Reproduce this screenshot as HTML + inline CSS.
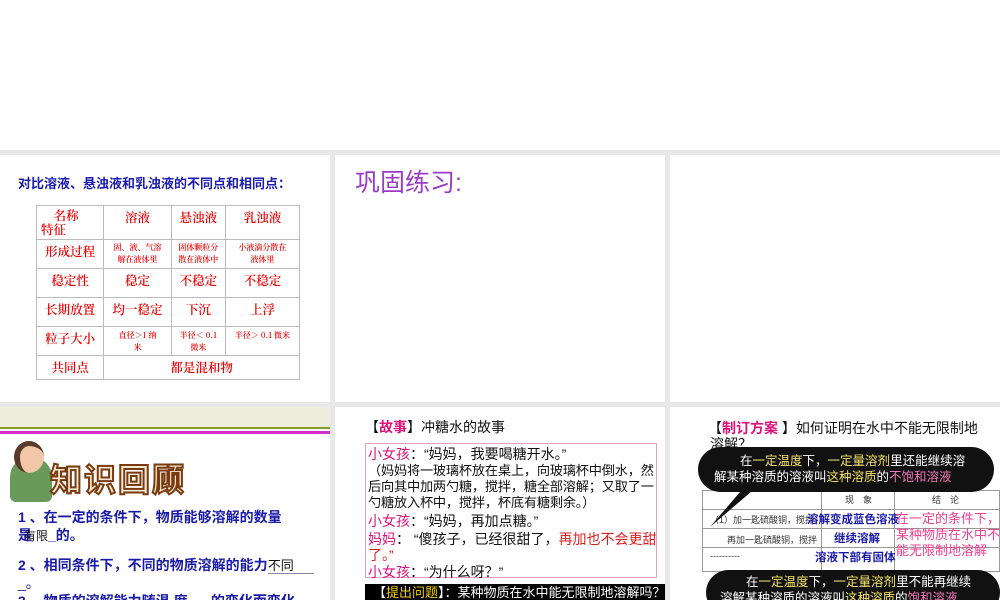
<!DOCTYPE html>
<html><head><meta charset="utf-8"><style>
*{margin:0;padding:0;box-sizing:border-box}
body{width:1000px;height:600px;overflow:hidden;background:#fff;position:relative;font-family:"Liberation Sans","Noto Sans CJK SC",sans-serif}
.bg{position:absolute;left:0;top:150px;width:1000px;height:450px;background:#e8e8e8}
.p{position:absolute;background:#fff;overflow:hidden}
.a{position:absolute;white-space:nowrap}
table{border-collapse:collapse;position:absolute;left:36px;top:50px;width:264px}
td{border:1px solid #bbb;color:#e00;font-family:"Noto Serif CJK SC",serif;font-size:12.5px;text-align:center;vertical-align:top;padding-top:2px;font-weight:600}
td.s{font-size:8px;line-height:12px}
.bl{color:#1a1aa8}
.pk{color:#e0107a}
.bub{position:absolute;background:#111;border-radius:40px;color:#fff;font-size:12.5px;line-height:16px}
.y{color:#f5e36a}.m{color:#f07ab8}
</style></head><body>
<div class="bg"></div>

<div class="p" style="left:0;top:155px;width:330px;height:247px">
<div class="a" style="left:18px;top:18px;font-size:13px;font-weight:bold;color:#1c1cb0">对比溶液、悬浊液和乳浊液的不同点和相同点：</div>
<table>
<tr style="height:34px"><td style="text-align:left;padding-left:4px;line-height:14px">&nbsp;&nbsp;&nbsp;&nbsp;名称<br>特征</td><td>溶液</td><td>悬浊液</td><td>乳浊液</td></tr>
<tr style="height:29px"><td>形成过程</td><td class="s">固、液、气溶<br>解在液体里</td><td class="s">固体颗粒分<br>散在液体中</td><td class="s">小液滴分散在<br>液体里</td></tr>
<tr style="height:29px"><td>稳定性</td><td>稳定</td><td>不稳定</td><td>不稳定</td></tr>
<tr style="height:29px"><td>长期放置</td><td>均一稳定</td><td>下沉</td><td>上浮</td></tr>
<tr style="height:29px"><td>粒子大小</td><td class="s" style="padding-top:3px">直径＞1 纳<br>米</td><td class="s" style="padding-top:3px">半径＜ 0.1<br>微米</td><td class="s" style="padding-top:3px">半径＞ 0.1 微米</td></tr>
<tr style="height:24px"><td>共同点</td><td colspan="3">都是混和物</td></tr>
</table>
</div>

<div class="p" style="left:335px;top:155px;width:330px;height:247px">
<div class="a" style="left:20px;top:8px;font-size:25px;color:#9a3cc8">巩固练习:</div>
</div>

<div class="p" style="left:670px;top:155px;width:330px;height:247px"></div>

<div class="p" style="left:0;top:407px;width:330px;height:193px">
<div style="position:absolute;left:0;top:0;width:330px;height:20px;background:#eeeedc"></div>
<div style="position:absolute;left:0;top:20px;width:330px;height:2px;background:#8a9a2a"></div>
<div style="position:absolute;left:0;top:24px;width:330px;height:3px;background:#d82cc8"></div>
<div style="position:absolute;left:10px;top:50px;width:42px;height:45px;background:#6a9a5a;border-radius:20px 20px 6px 6px"></div>
<div style="position:absolute;left:14px;top:34px;width:30px;height:32px;background:#f2c8a8;border-radius:50%;border-left:6px solid #5a3a2a;border-top:5px solid #5a3a2a"></div>
<div class="a" style="left:50px;top:48px;font-size:32px;font-weight:bold;color:#f4e8d0;-webkit-text-stroke:2px #7a3a10;letter-spacing:2px">知识回顾</div>
<div class="a bl" style="left:18px;top:100px;font-size:14px;font-weight:600">1 、在一定的条件下，物质能够溶解的数量</div>
<div class="a bl" style="left:18px;top:118px;font-size:14px;font-weight:600">是<span style="color:#111;font-size:12px;margin-left:-8px;font-weight:normal">有限</span>_的。</div>
<div class="a bl" style="left:18px;top:148px;font-size:14px;font-weight:600">2 、相同条件下，不同的物质溶解的能力<span style="color:#111;font-size:13px;border-bottom:1px solid #88a;padding-right:20px;font-weight:normal">不同</span></div>
<div class="a bl" style="left:18px;top:166px;font-size:14px">_。</div>
<div class="a bl" style="left:18px;top:184px;font-size:14px;font-weight:600">3 、物质的溶解能力随温 度 &nbsp;&nbsp;&nbsp;&nbsp;&nbsp;的变化而变化</div>
</div>

<div class="p" style="left:335px;top:407px;width:330px;height:193px">
<div class="a" style="left:30px;top:10px;font-size:14px;color:#111">【<span class="pk" style="font-weight:bold">故事</span>】冲糖水的故事</div>
<div style="position:absolute;left:30px;top:36px;width:292px;height:135px;border:1px solid #e0a0c8"></div>
<div class="a" style="left:33px;top:37px;font-size:14px;color:#111"><span class="pk">小女孩</span>：“妈妈，我要喝糖开水。”</div>
<div style="position:absolute;left:33px;top:56px;width:292px;font-size:13.2px;line-height:16px;color:#111;letter-spacing:-0.2px">（妈妈将一玻璃杯放在桌上，向玻璃杯中倒水，然后向其中加两勺糖，搅拌，糖全部溶解；又取了一勺糖放入杯中，搅拌，杯底有糖剩余。）</div>
<div class="a" style="left:33px;top:104px;font-size:14px;color:#111"><span class="pk">小女孩</span>：“妈妈，再加点糖。”</div>
<div style="position:absolute;left:33px;top:124px;width:292px;font-size:14px;line-height:16px;color:#111"><span class="pk">妈妈</span>： “傻孩子，已经很甜了，<span style="color:#e02020">再加也不会更甜了。”</span></div>
<div class="a" style="left:33px;top:157px;font-size:14px;color:#111;line-height:16px"><span class="pk">小女孩</span>：“为什么呀？”</div>
<div style="position:absolute;left:30px;top:177px;width:300px;height:20px;background:#000;color:#fff;font-size:13px;padding-left:8px;white-space:nowrap;line-height:18px">【<span style="color:#f5d000">提出问题</span>】：某种物质在水中能无限制地溶解吗？</div>
</div>

<div class="p" style="left:670px;top:407px;width:330px;height:193px">
<div class="a" style="left:38px;top:11px;font-size:14px;color:#111">【<span class="pk" style="font-weight:bold">制订方案</span> 】如何证明在水中不能无限制地</div>
<div class="a" style="left:40px;top:27px;font-size:14px;color:#111">溶解？</div>
<div style="position:absolute;left:32px;top:83px;width:298px;height:82px;border:1px solid #999"></div>
<div style="position:absolute;left:32px;top:102px;width:298px;border-top:1px solid #999"></div>
<div style="position:absolute;left:32px;top:121px;width:298px;border-top:1px solid #999"></div>
<div style="position:absolute;left:32px;top:140px;width:298px;border-top:1px solid #999"></div>
<div style="position:absolute;left:151px;top:83px;height:82px;border-left:1px solid #999"></div>
<div style="position:absolute;left:224px;top:83px;height:82px;border-left:1px solid #999"></div>
<div class="a" style="left:175px;top:86px;font-size:9px;color:#333">现　象</div>
<div class="a" style="left:262px;top:86px;font-size:9px;color:#333">结　论</div>
<div class="a" style="left:40px;top:106px;font-size:9px;color:#333">（1）加一匙硫酸铜，搅拌</div>
<div class="a" style="left:57px;top:126px;font-size:9px;color:#333">再加一匙硫酸铜，搅拌</div>
<div class="a" style="left:40px;top:144px;font-size:9px;color:#333">----------</div>
<div class="a" style="left:137px;top:104px;font-size:11.5px;font-weight:bold;color:#1a1aa8">溶解变成蓝色溶液</div>
<div class="a" style="left:164px;top:123px;font-size:11.5px;font-weight:bold;color:#1a1aa8">继续溶解</div>
<div class="a" style="left:145px;top:142px;font-size:11.5px;font-weight:bold;color:#1a1aa8">溶液下部有固体</div>
<div style="position:absolute;left:226px;top:104px;width:104px;font-size:13px;line-height:16px;color:#f04090">在一定的条件下，某种物质在水中不能无限制地溶解</div>
<svg style="position:absolute;left:0;top:0" width="330" height="193"><polygon points="70,85 110,60 40,120" fill="#111"/><polygon points="90,160 60,150 120,170" fill="#111"/></svg>
<div class="bub" style="left:28px;top:40px;width:296px;height:45px;padding:6px 0 0 16px"><span style="padding-left:26px">在<span class="y">一定温度</span>下，<span class="y">一定量溶剂</span>里还能继续溶</span><br>解某种溶质的溶液叫<span class="y">这种溶质</span>的<span class="m">不饱和溶液</span></div>
<div class="bub" style="left:36px;top:163px;width:294px;height:45px;padding:4px 0 0 14px"><span style="padding-left:26px">在<span class="y">一定温度</span>下，<span class="y">一定量溶剂</span>里不能再继续</span><br>溶解某种溶质的溶液叫<span class="y">这种溶质</span>的<span class="m">饱和溶液</span></div>
</div>
</body></html>
